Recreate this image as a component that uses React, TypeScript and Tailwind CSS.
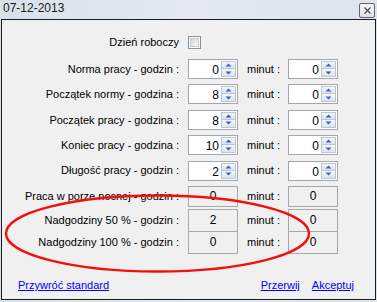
import React from "react";

type SpinRow = { label: string; hours: number; minutes: number };

const spinRows: SpinRow[] = [
  { label: "Norma pracy - godzin :", hours: 0, minutes: 0 },
  { label: "Początek normy - godzina :", hours: 8, minutes: 0 },
  { label: "Początek pracy - godzina :", hours: 8, minutes: 0 },
  { label: "Koniec pracy - godzina :", hours: 10, minutes: 0 },
  { label: "Długość pracy - godzin :", hours: 2, minutes: 0 },
];

const Arrow = ({ up }: { up: boolean }) => (
  <svg width="7" height="4" viewBox="0 0 7 4">
    <polygon
      points={up ? "0.5,3.5 3.5,0.5 6.5,3.5" : "0.5,0.5 3.5,3.5 6.5,0.5"}
      fill="#3f5fc2"
    />
  </svg>
);

const SpinBox = ({ value }: { value: number }) => (
  <div className="flex h-[20px] w-[50px] border border-[#a3a6ab] bg-white p-[1px]">
    <div className="flex-1 pr-[2px] text-right text-[12px] leading-[18px] text-black">
      {value}
    </div>
    <div className="flex w-[15px] flex-col">
      <div className="flex h-[8px] items-center justify-center border border-[#bcc6d2] bg-gradient-to-b from-[#f4f7fb] to-[#dbe3ec]">
        <Arrow up />
      </div>
      <div className="flex h-[8px] items-center justify-center border border-t-0 border-[#bcc6d2] bg-gradient-to-b from-[#f4f7fb] to-[#dbe3ec]">
        <Arrow up={false} />
      </div>
    </div>
  </div>
);

const ReadBox = ({ value, h }: { value: number; h: string }) => (
  <div
    className={`flex w-[50px] items-center justify-center border border-[#a8a8a8] text-[12px] text-black ${h}`}
  >
    {value}
  </div>
);

const Label = ({ text }: { text: string }) => (
  <div className="w-[177px] whitespace-nowrap text-right text-[11px] text-black">
    {text}
  </div>
);

const Minut = () => (
  <div className="w-[50px] pl-[9px] text-[11px] text-black">minut :</div>
);

export default function App() {
  return (
    <div
      className="relative flex h-[302px] w-[377px] flex-col overflow-hidden bg-gradient-to-r from-[#d8e1ea] via-[#e4eaf0] to-[#dde4ec]"
      style={{ fontFamily: '"Liberation Sans", Arial, sans-serif' }}
    >
      {/* title bar */}
      <div className="flex h-[19px] items-start justify-between">
        <span className="ml-[3px] mt-[1px] text-[12px] leading-[15px] text-[#1b1b1b]">
          07-12-2013
        </span>
        <button className="mr-[2px] mt-[3px] flex h-[15px] w-[16px] items-center justify-center rounded-[2px] border border-[#6e5a7e] bg-gradient-to-b from-[#f3f4f7] to-[#dde1e8]">
          <svg width="9" height="9" viewBox="0 0 9 9">
            <path d="M1.5 1.5 L7.5 7.5 M7.5 1.5 L1.5 7.5" stroke="#ffffff" strokeWidth="3.2" />
            <path d="M1.5 1.5 L7.5 7.5 M7.5 1.5 L1.5 7.5" stroke="#4b4b4b" strokeWidth="1.4" />
          </svg>
        </button>
      </div>

      {/* client panel */}
      <div className="ml-[1px] flex h-[281px] w-[375px] flex-col border border-[#1c1c1c] bg-[#f0f0f0] pt-[16px]">
        <div className="flex h-[13px] items-center">
          <Label text="Dzień roboczy" />
          <div className="ml-[9px] flex h-[13px] w-[13px] items-center justify-center border border-[#8e8f8f] bg-white">
            <div className="h-[9px] w-[9px] border border-[#c4c8cc] bg-gradient-to-br from-[#d6d9dd] to-[#f7f7f7]" />
          </div>
        </div>

        <div className="mt-[10px] flex flex-col gap-[5.4px]">
          {spinRows.map((r) => (
            <div key={r.label} className="flex h-[20px] items-center">
              <Label text={r.label} />
              <div className="ml-[9px]">
                <SpinBox value={r.hours} />
              </div>
              <Minut />
              <SpinBox value={r.minutes} />
            </div>
          ))}
        </div>

        <div className="mt-[5px] flex h-[21px] items-center">
          <Label text="Praca w porze nocnej - godzin :" />
          <div className="ml-[9px]">
            <ReadBox value={0} h="h-[21px]" />
          </div>
          <Minut />
          <ReadBox value={0} h="h-[21px]" />
        </div>

        <div className="mt-[2px] flex h-[23px] items-center">
          <Label text="Nadgodziny 50 % - godzin :" />
          <div className="ml-[9px]">
            <ReadBox value={2} h="h-[23px]" />
          </div>
          <Minut />
          <ReadBox value={0} h="h-[23px]" />
        </div>

        <div className="-mt-[1px] flex h-[23px] items-center">
          <Label text="Nadgodziny 100 % - godzin :" />
          <div className="ml-[9px]">
            <ReadBox value={0} h="h-[23px]" />
          </div>
          <Minut />
          <ReadBox value={0} h="h-[23px]" />
        </div>

        <div className="mt-auto flex items-center justify-between pb-[7px] pl-[16px] pr-[21px] text-[11px] leading-[13px] text-[#0000ff]">
          <a className="cursor-pointer underline">Przywróć standard</a>
          <div className="flex gap-[12px]">
            <a className="cursor-pointer underline">Przerwij</a>
            <a className="cursor-pointer underline">Akceptuj</a>
          </div>
        </div>
      </div>

      {/* red annotation ellipse */}
      <svg
        className="pointer-events-none absolute left-0 top-0"
        width="377"
        height="302"
        viewBox="0 0 377 302"
      >
        <ellipse cx="157.5" cy="233.5" rx="151.5" ry="38" fill="none" stroke="#f01010" strokeWidth="2.4" />
      </svg>
    </div>
  );
}
